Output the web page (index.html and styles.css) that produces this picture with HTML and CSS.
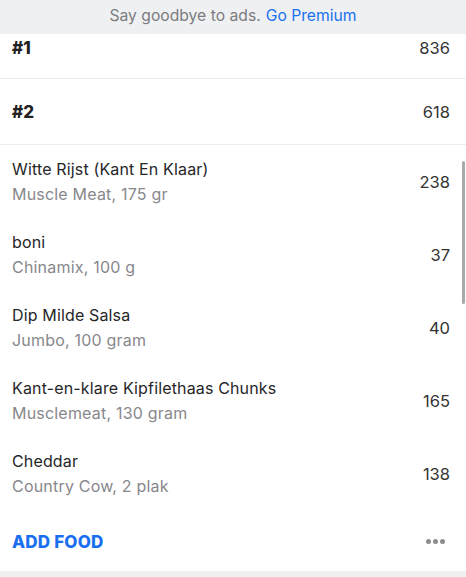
FILE: index.html
```html
<!DOCTYPE html>
<html>
<head>
<meta charset="utf-8">
<link rel="stylesheet" href="styles.css">
</head>
<body>
<div class="screen">
  <div class="banner">Say goodbye to ads. <span class="link">Go Premium</span></div>
  <div class="meal meal-first"><span class="meal-name">#1</span><span class="meal-cal">836</span></div>
  <div class="meal"><span class="meal-name">#2</span><span class="meal-cal">618</span></div>
  <div class="foods">
    <div class="food">
      <div class="food-text"><div class="food-title">Witte Rijst (Kant En Klaar)</div><div class="food-sub">Muscle Meat, 175 gr</div></div>
      <div class="food-cal">238</div>
    </div>
    <div class="food">
      <div class="food-text"><div class="food-title">boni</div><div class="food-sub">Chinamix, 100 g</div></div>
      <div class="food-cal">37</div>
    </div>
    <div class="food">
      <div class="food-text"><div class="food-title">Dip Milde Salsa</div><div class="food-sub">Jumbo, 100 gram</div></div>
      <div class="food-cal">40</div>
    </div>
    <div class="food">
      <div class="food-text"><div class="food-title">Kant-en-klare Kipfilethaas Chunks</div><div class="food-sub">Musclemeat, 130 gram</div></div>
      <div class="food-cal">165</div>
    </div>
    <div class="food">
      <div class="food-text"><div class="food-title">Cheddar</div><div class="food-sub">Country Cow, 2 plak</div></div>
      <div class="food-cal">138</div>
    </div>
    <div class="scrollbar"></div>
  </div>
  <div class="footer-row">
    <span class="add">ADD FOOD</span>
    <span class="more"><i></i><i></i><i></i></span>
  </div>
  <div class="bottom"></div>
</div>
</body>
</html>
```
FILE: styles.css
```css
html, body {
  margin: 0;
  padding: 0;
  background: #ffffff;
}
.screen {
  width: 466px;
  height: 577px;
  overflow: hidden;
  font-family: Inter, "Noto Sans", sans-serif;
  color: #2a2a2c;
  display: flex;
  flex-direction: column;
}
.banner {
  height: 34px;
  flex: none;
  background: #eff0f2;
  color: #7c7c80;
  font-size: 15.7px;
  display: flex;
  align-items: center;
  justify-content: center;
  padding: 0 0 4px 0;
  box-sizing: border-box;
}
.link {
  color: #1a72f0;
  margin-left: 5px;
}
.meal {
  height: 66px;
  flex: none;
  display: flex;
  align-items: center;
  justify-content: space-between;
  padding: 0 16px 0 12px;
  border-bottom: 1px solid #ededef;
  box-sizing: border-box;
}
.meal-first {
  height: 45px;
  align-items: flex-start;
  padding-top: 4px;
}
.meal-name {
  font-weight: 800;
  font-size: 17px;
  color: #222;
}
.meal-cal {
  font-size: 16.5px;
  color: #333;
}
.foods {
  position: relative;
  flex: none;
}
.food {
  height: 73px;
  display: flex;
  align-items: center;
  justify-content: space-between;
  padding: 0 16px 0 12px;
  box-sizing: border-box;
}
.food-text {
  display: flex;
  flex-direction: column;
  gap: 5px;
  margin-top: -1px;
}
.food-title {
  font-size: 16px;
  letter-spacing: 0.15px;
  color: #262628;
}
.food-sub {
  font-size: 16px;
  letter-spacing: 0.2px;
  color: #88888c;
}
.food-cal {
  font-size: 16.5px;
  color: #333;
}
.scrollbar {
  position: absolute;
  right: 1px;
  top: 16px;
  width: 3px;
  height: 143px;
  border-radius: 2px;
  background: #a9a9ab;
}
.footer-row {
  height: 61px;
  flex: none;
  display: flex;
  align-items: center;
  justify-content: space-between;
  padding: 2px 21px 0 12px;
  box-sizing: border-box;
}
.add {
  color: #1a6ff0;
  font-weight: 800;
  font-size: 17px;
  letter-spacing: 0.2px;
}
.more {
  display: flex;
  gap: 2px;
}
.more i {
  width: 5px;
  height: 5px;
  border-radius: 50%;
  background: #8c8c90;
}
.bottom {
  flex: 1;
  background: #eff0f2;
}
```
